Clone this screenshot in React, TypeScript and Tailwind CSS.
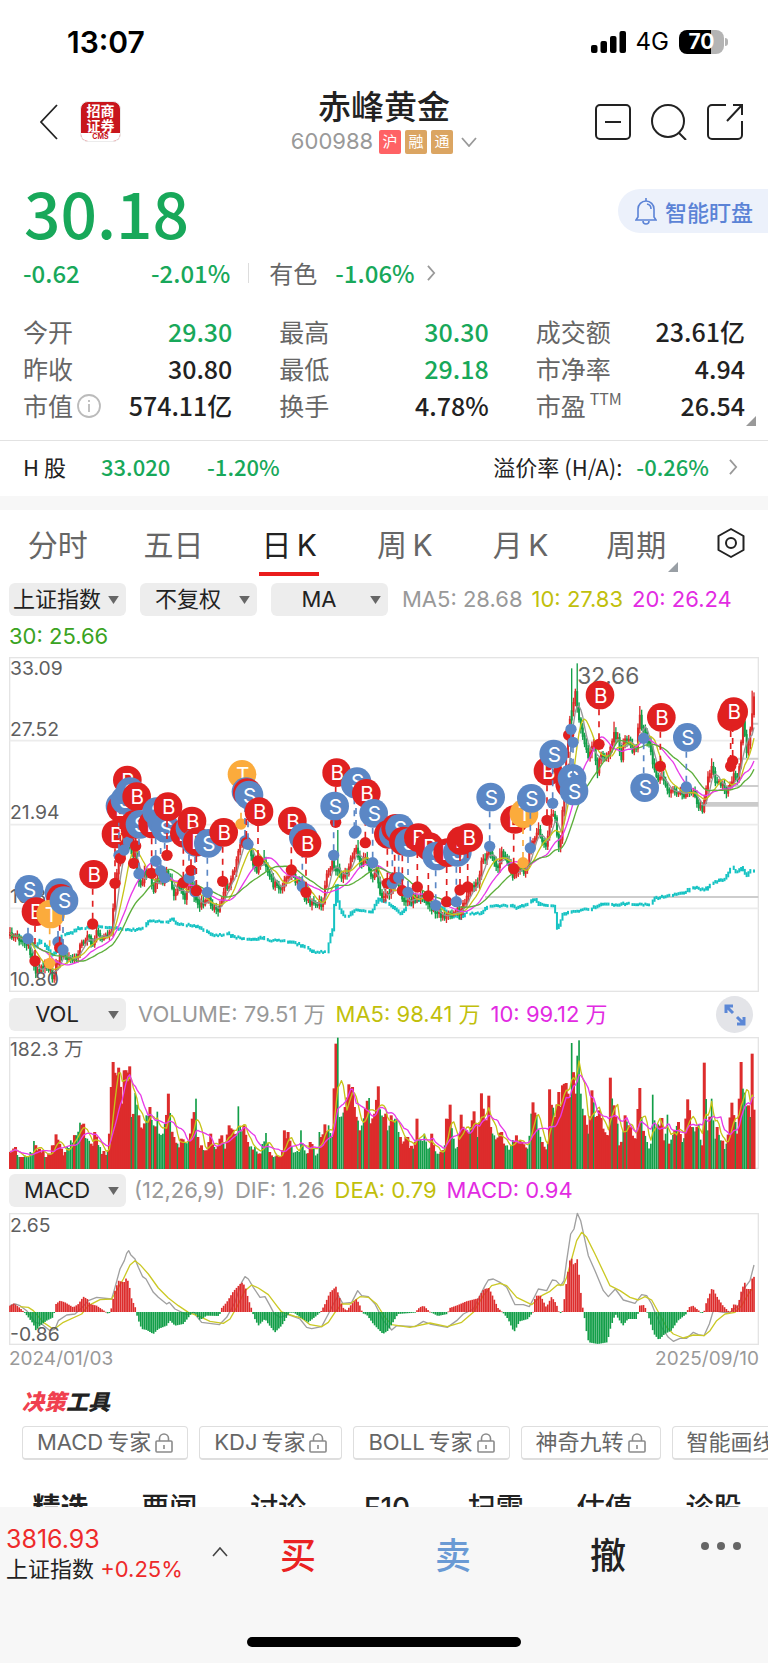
import React from "react";

const CJK = "font-['Noto_Sans_CJK_SC','Noto_Sans_CJK_TC',sans-serif]";

type Point = [number, number];
type Mark = ["B" | "S" | "T", number, number, number];

const RED = "#dd2c2c";
const GREEN = "#129e48";
const COLORS = { B: "#e02020", S: "#5b87c5", T: "#fbab3c" };

const START = 30;
const END = 2262;
const COUNT = 405;
const STEP = (END - START) / (COUNT - 1);

const parse = (s: string): Point[] =>
  s
    .trim()
    .split(/\s+/)
    .map((p) => p.split(",").map(Number) as Point);

const at = (points: Point[], x: number) => {
  if (x <= points[0][0]) return points[0][1];
  for (let i = 1; i < points.length; i++) {
    const [x1, y1] = points[i];
    if (x <= x1) {
      const [x0, y0] = points[i - 1];
      return y0 + ((y1 - y0) * (x - x0)) / (x1 - x0 || 1);
    }
  }
  return points[points.length - 1][1];
};

// stable pseudo random value in -1..1
const noise = (i: number, seed: number) => {
  const v = Math.sin(i * 12.9898 + seed * 78.233) * 43758.5453;
  return (v - Math.floor(v)) * 2 - 1;
};

const xs = Array.from({ length: COUNT }, (_, i) => START + i * STEP);

const average = (values: number[], n: number) =>
  values
    .map((_, i) => {
      const part = values.slice(Math.max(0, i - n + 1), i + 1);
      const mean = part.reduce((a, b) => a + b, 0) / part.length;
      return `${xs[i].toFixed(1)},${mean.toFixed(1)}`;
    })
    .join(" ");

const pricePoints = parse(`
30,855 60,865 85,890 105,960 120,965 135,930 150,960 158,985 170,940 185,910 200,925 225,930 240,890 262,855 275,885 290,850 310,860
332,855 338,800 345,700 355,640 365,620 375,570 385,555 395,620 405,600 412,680 425,710 435,665 450,680 460,715 475,690 490,695
500,660 512,700 525,745 535,700 555,740 570,690 590,765 605,760 620,745 635,765 655,780 670,720 690,700 705,650 715,600 728,560
745,590 770,670 790,625 810,690 830,710 845,720 865,670 880,680 900,700 915,750 935,760 950,755 968,760 980,680 995,640 1015,660
1025,690 1040,670 1055,620 1070,590 1080,650 1095,610 1115,680 1130,660 1140,730 1160,740 1175,710 1190,690 1205,750 1225,755
1245,740 1265,730 1290,770 1310,790 1340,800 1360,780 1380,785 1400,745 1420,710 1435,700 1445,640 1460,610 1475,610 1490,660
1505,610 1520,630 1540,690 1554,650 1574,670 1589,600 1604,560 1614,530 1624,575 1639,580 1654,500 1664,490 1674,590 1684,570
1689,440 1702,260 1714,180 1727,130 1734,180 1749,270 1764,320 1779,270 1792,360 1804,310 1814,330 1829,310 1841,240 1854,270
1864,330 1874,260 1884,270 1899,310 1909,290 1917,190 1929,240 1944,270 1959,340 1974,390 1984,370 2004,430 2024,420 2044,435
2064,420 2079,420 2094,460 2109,480 2116,420 2129,370 2136,350 2146,390 2164,400 2179,430 2194,400 2204,360 2214,400 2221,300
2229,210 2242,320 2250,240 2256,200 2262,150`);

const closes = xs.map((x, i) => at(pricePoints, x) + noise(i, 1) * 10);

// single bars whose shadow goes far above the body
const longShadows = parse("790,600 1012,540 1072,570 1500,595 1613,517 1716,55 1733,40 1842,215 1917,168 2136,325 2257,122");

const candles = closes.map((close, i) => {
  const open = i ? closes[i - 1] : close + 6;
  const tall = longShadows.find(([x]) => Math.abs(x - xs[i]) <= STEP / 2);
  const up = i > COUNT - 5 || close < open;
  const spike = tall && (tall[0] === 1012 || tall[0] === 1716 || tall[0] === 1733);
  return {
    x: xs[i],
    up: spike ? false : up,
    top: Math.min(open, close) - 2,
    bottom: Math.max(open, close) + 3,
    high: tall ? tall[1] : Math.min(open, close) - 6 - Math.abs(noise(i, 2)) * 12,
    low: Math.max(open, close) + 6 + Math.abs(noise(i, 3)) * 12,
  };
});

const indexPoints = parse(`
30,855 70,862 95,880 105,895 118,870 135,885 155,915 170,900 185,855 215,848 235,835 300,828 340,835 395,840 430,835 445,815
500,815 515,808 530,820 590,830 640,855 670,855 680,850 700,862 740,865 770,870 785,860 800,872 850,872 900,885 940,905 980,905
990,860 1000,830 1002,770 1007,700 1015,770 1030,795 1045,800 1060,780 1115,785 1135,745 1175,770 1200,790 1225,765 1265,745
1290,765 1325,775 1350,795 1380,805 1395,790 1440,790 1460,772 1530,765 1544,773 1584,760 1602,745 1619,765 1664,770 1669,835
1679,820 1686,795 1714,783 1769,778 1804,760 1854,768 1874,760 1949,765 1964,745 2014,735 2059,725 2074,710 2114,720 2134,700
2174,685 2194,652 2209,665 2224,652 2239,678 2249,662 2262,665`);

const marks: Mark[] = [
  ["S", 87, 718, 866], ["B", 108, 785, 933], ["S", 177, 728, 876], ["B", 182, 745, 893], ["T", 152, 792, 940],
  ["S", 192, 752, 900], ["B", 281, 673, 822], ["B", 348, 552, 700], ["S", 360, 468, 616], ["B", 364, 476, 625],
  ["B", 382, 390, 540], ["S", 375, 450, 600], ["S", 390, 425, 575], ["B", 410, 440, 588], ["B", 404, 523, 640],
  ["S", 420, 523, 671], ["B", 458, 522, 670], ["S", 470, 485, 633], ["S", 485, 515, 662], ["S", 497, 535, 683],
  ["B", 504, 470, 616], ["B", 553, 550, 698], ["S", 570, 535, 684], ["B", 576, 513, 661], ["S", 588, 577, 725],
  ["B", 592, 575, 722], ["S", 625, 580, 727], ["B", 671, 547, 694], ["T", 726, 373, 522], ["S", 738, 425, 573],
  ["B", 742, 428, 578], ["S", 747, 435, 583], ["B", 777, 485, 633], ["B", 877, 513, 660], ["S", 910, 562, 710],
  ["B", 921, 580, 727], ["B", 1010, 368, 517], ["S", 1004, 468, 616], ["S", 1066, 402, 549], ["S", 1071, 395, 543],
  ["B", 1099, 430, 578], ["S", 1121, 490, 638], ["B", 1165, 553, 700], ["S", 1180, 552, 700], ["B", 1187, 535, 684],
  ["S", 1199, 535, 683], ["B", 1210, 573, 722], ["S", 1227, 578, 727], ["B", 1255, 563, 711], ["B", 1288, 590, 738],
  ["S", 1310, 618, 766], ["B", 1343, 608, 755], ["S", 1372, 607, 755], ["B", 1383, 572, 720], ["B", 1406, 563, 711],
  ["S", 1472, 441, 589], ["B", 1544, 508, 656], ["T", 1572, 491, 638], ["S", 1594, 445, 594], ["B", 1644, 363, 511],
  ["S", 1661, 312, 460], ["B", 1709, 402, 255], ["S", 1716, 385, 238], ["S", 1722, 423, 277], ["B", 1800, 135, 283],
  ["B", 1984, 202, 349], ["S", 1934, 413, 265], ["S", 2062, 262, 411], ["B", 2195, 200, 349], ["B", 2201, 185, 333],
];

const volumePoints = parse(`
30,485 45,470 55,500 75,495 90,485 102,452 120,475 145,490 155,465 170,432 185,475 200,470 215,450 238,397 250,400 262,445
275,460 285,425 300,470 322,480 329,430 335,290 342,215 348,255 358,232 365,340 375,240 388,228 395,380 407,308 418,375 428,415
440,375 452,350 462,405 472,364 480,430 490,430 505,310 512,368 520,440 535,460 545,445 565,450 577,385 587,325 593,440 605,465
620,480 632,430 645,470 665,435 675,475 685,405 697,418 707,430 713,348 719,410 730,405 745,455 765,470 775,490 798,428 810,485
830,495 850,480 855,420 865,425 875,470 895,485 905,420 915,480 920,490 932,455 950,490 958,425 963,440 972,402 985,405 998,440
1006,160 1013,142 1020,380 1035,350 1045,282 1058,290 1065,350 1080,420 1095,355 1105,323 1110,390 1125,370 1133,288 1140,357
1155,370 1165,420 1174,375 1189,385 1204,440 1224,440 1239,475 1253,385 1259,445 1274,430 1286,475 1297,430 1314,490 1334,465
1341,385 1351,343 1359,445 1374,470 1384,373 1399,420 1414,390 1424,363 1436,440 1444,309 1452,355 1459,390 1466,316 1474,410
1484,435 1504,425 1524,465 1547,435 1564,455 1584,475 1591,370 1601,336 1609,375 1624,455 1642,460 1650,297 1659,352 1665,380
1674,305 1682,350 1687,285 1696,278 1705,310 1712,320 1717,158 1724,310 1733,196 1738,150 1744,310 1754,375 1764,430 1776,300
1789,380 1799,360 1809,415 1824,435 1831,262 1842,345 1852,400 1859,465 1875,375 1889,405 1906,445 1918,293 1926,380 1939,455
1950,460 1956,313 1962,390 1970,410 1984,383 1994,450 2000,373 2007,460 2024,420 2037,395 2049,455 2065,327 2074,410 2094,402
2107,465 2115,217 2122,420 2137,325 2146,445 2154,410 2164,450 2179,460 2196,337 2204,395 2210,430 2217,325 2224,215 2231,295
2244,345 2251,380 2257,190 2264,358`);

const greenRanges = parse(`
48,62 74,106 130,140 185,190 200,222 228,245 256,270 292,306 318,324 392,398 404,412 434,448 455,463 470,495 508,515 528,538
550,570 584,590 606,614 640,645 670,676 706,730 748,756 762,775 785,805 815,828 872,925 940,962 985,1000 1010,1030 1072,1076
1084,1092 1102,1110 1137,1150 1160,1172 1182,1200 1235,1242 1254,1290 1303,1320 1330,1338 1355,1374 1410,1412 1432,1438
1474,1486 1515,1542 1580,1595 1606,1624 1640,1645 1655,1665 1714,1720 1730,1752 1762,1770 1780,1786 1804,1808 1836,1842
1850,1856 1866,1870 1880,1884 1920,1928 1936,1978 1996,2003 2012,2020 2028,2034 2046,2056 2078,2090 2096,2106 2118,2124
2132,2146 2156,2166 2172,2184 2206,2212 2226,2240 2248,2252`);

const volumes = xs.map((x, i) => {
  const key = volumePoints.find(([kx]) => Math.abs(kx - x) <= STEP / 2);
  return key ? key[1] : Math.min(500, at(volumePoints, x) + 10 + noise(i, 5) * 12);
});

const macdPoints = parse(`
30,405 42,398 60,412 72,424 85,440 100,460 108,480 120,465 140,450 160,440 168,400 180,390 195,395 220,410 235,400 250,378
262,385 270,400 290,405 318,424 325,430 332,424 337,395 345,360 355,330 372,335 380,320 387,340 395,385 408,415 412,440 425,475
440,478 460,490 475,475 500,465 510,450 525,465 550,460 575,428 585,428 600,448 620,435 658,436 665,412 680,395 700,362 725,335
735,345 745,385 755,415 762,440 775,465 795,445 805,460 825,485 845,465 868,426 880,424 895,436 925,455 950,435 962,424 975,400
990,365 1008,348 1015,370 1028,410 1040,420 1055,400 1070,385 1080,405 1088,428 1100,432 1120,460 1149,490 1164,480 1179,455
1194,430 1244,426 1259,410 1271,405 1289,423 1314,436 1342,430 1349,412 1374,403 1399,392 1434,383 1452,355 1467,352 1479,378
1494,412 1509,426 1524,445 1542,485 1559,452 1584,445 1599,424 1606,375 1622,375 1639,410 1655,378 1669,400 1679,430 1689,420
1697,350 1706,290 1712,255 1722,285 1732,265 1738,320 1746,400 1752,430 1759,480 1766,515 1794,520 1822,515 1832,470 1846,430
1869,465 1884,445 1912,445 1917,405 1932,403 1942,425 1952,460 1962,490 1977,508 1994,490 2014,480 2034,450 2059,430 2066,410
2079,405 2104,426 2111,428 2119,395 2137,350 2149,375 2169,405 2189,425 2202,400 2214,405 2224,360 2234,335 2240,355 2252,355
2257,320 2264,318`);

const dif =
  "30,405 45,400 60,405 80,420 95,440 105,455 125,460 150,480 165,475 175,450 200,433 225,430 245,412 265,390 290,380 335,385 345,350 360,295 373,270 380,248 386,240 392,252 405,265 415,290 428,318 438,325 460,365 475,380 500,400 508,395 525,415 560,432 580,425 605,455 658,462 680,440 705,395 725,335 735,318 745,325 760,350 780,380 795,378 810,405 822,428 840,440 865,432 900,445 920,470 935,474 965,468 985,430 1000,400 1015,375 1028,398 1055,395 1073,360 1085,375 1105,378 1125,400 1150,450 1175,478 1190,465 1245,468 1270,452 1290,460 1342,470 1370,450 1390,430 1420,415 1440,375 1455,345 1465,328 1480,325 1500,335 1520,350 1545,402 1570,402 1588,408 1600,385 1615,355 1640,360 1657,328 1668,330 1682,345 1692,330 1700,270 1712,190 1722,175 1732,128 1742,150 1765,255 1785,300 1810,360 1825,378 1846,355 1870,388 1905,398 1925,372 1940,375 1955,400 1965,425 1985,470 2005,500 2020,512 2040,503 2060,503 2080,485 2095,492 2112,495 2128,460 2140,420 2170,425 2190,425 2215,405 2235,350 2250,330 2262,283";
const dea =
  "60,408 85,410 100,420 130,455 155,472 170,470 190,455 245,430 265,405 300,387 335,385 350,360 370,325 390,283 405,270 420,282 445,310 475,352 505,382 535,405 565,425 600,438 630,452 670,458 690,445 710,410 735,360 755,343 775,352 805,372 830,405 845,424 885,437 905,442 930,462 965,468 985,455 1005,425 1025,400 1050,400 1080,378 1105,380 1130,400 1155,440 1175,462 1230,470 1290,457 1342,468 1385,455 1420,425 1450,375 1475,345 1500,338 1520,345 1550,380 1595,402 1625,375 1650,362 1672,343 1690,343 1700,320 1715,265 1730,210 1745,185 1760,200 1785,250 1830,345 1860,360 1890,380 1915,388 1935,378 1955,388 1975,424 2000,470 2020,490 2050,502 2080,493 2112,495 2130,480 2150,450 2175,430 2205,425 2225,405 2245,370 2256,355";

const quotes = [
  { label: "今开", value: "29.30", down: true },
  { label: "最高", value: "30.30", down: true },
  { label: "成交额", value: "23.61亿" },
  { label: "昨收", value: "30.80" },
  { label: "最低", value: "29.18", down: true },
  { label: "市净率", value: "4.94" },
  { label: "市值", value: "574.11亿", info: true },
  { label: "换手", value: "4.78%" },
  { label: "市盈", value: "26.54", sup: "TTM" },
];

const Chevron = ({ className }: { className: string }) => (
  <svg viewBox="0 0 10 18" className={className} fill="none" stroke="currentColor" strokeWidth="2">
    <path d="M1 1l7 8-7 8" />
  </svg>
);

const Picker = ({ label, options }: { label: string; options: string[] }) => (
  <div className="flex h-[33px] w-[117px] shrink-0 items-center justify-between rounded-md bg-[#ededed] pr-[7px] text-[#222]">
    <select aria-label={label} className="h-full w-24 appearance-none bg-transparent text-center text-[22px] outline-none">
      {options.map((o) => (
        <option key={o}>{o}</option>
      ))}
    </select>
    <svg viewBox="0 0 12 9" className="h-2 w-[11px] shrink-0" fill="#666">
      <path d="M0 0h12L6 9z" />
    </svg>
  </div>
);

const AxisText = ({ x, y, children }: { x: number; y: number; children: React.ReactNode }) => (
  <text x={x} y={y} fontSize="58" fill="#5f5f5f">
    {children}
  </text>
);

const Frame = ({ y, height }: { y: number; height: number }) => (
  <rect x="29" y={y + 2} width="2246" height={height - 4} fill="none" stroke="#e4e4e4" strokeWidth="4" />
);

const PriceChart = () => (
  <svg viewBox="27 21 2250 1005" className="block h-auto w-full overflow-visible" role="img" aria-label="日K">
    <Frame y={21} height={1005} />
    <path d="M29 272H2275M29 524H2275M29 775H2275" stroke="#ececec" strokeWidth="5" />
    <path d="M1455 741H2275M2254 221H2275M2214 326H2275M2204 408H2275" stroke="#cdcdcd" strokeWidth="6" />
    <path d="M2116 463H2275" stroke="#cbcbcb" strokeWidth="14" />
    {xs.map((x, i) => {
      if (i % 11 === 7) return null;
      const y = at(indexPoints, x);
      const last = at(indexPoints, x - STEP);
      return <rect key={i} x={x - 3} y={Math.min(y, last) - 4 + noise(i, 8) * 3} width="6" height={Math.abs(y - last) + 8} fill="#16c3c3" />;
    })}
    {candles.map((c, i) => (
      <g key={i} fill={c.up ? RED : GREEN}>
        <rect x={c.x - 2} y={c.high} width="4" height={c.low - c.high} />
        <rect x={c.x - 3} y={c.top} width="6" height={c.bottom - c.top} />
      </g>
    ))}
    <g fill="none" strokeWidth="4" strokeLinejoin="round">
      <polyline points={average(closes, 5)} stroke="#969696" />
      <polyline points={average(closes, 10)} stroke="#c6c419" />
      <polyline points={average(closes, 20)} stroke="#e83be8" />
      <polyline points={average(closes, 30)} stroke="#5cae3a" />
    </g>
    <AxisText x={30} y={76}>33.09</AxisText>
    <AxisText x={30} y={258}>27.52</AxisText>
    <AxisText x={30} y={508}>21.94</AxisText>
    <AxisText x={30} y={758}>16.37</AxisText>
    <AxisText x={30} y={1008}>10.80</AxisText>
    <text x="1732" y="101" fontSize="68" fill="#666">
      32.66
    </text>
    {marks.map(([kind, x, y, dot], i) => (
      <g key={i} stroke={COLORS[kind]} fill={COLORS[kind]}>
        <circle cx={x} cy={y} r="43" stroke="none" />
        <text x={x + 2} y={y + 23} fontSize="62" textAnchor="middle" fill="#fff" stroke="none">
          {kind}
        </text>
        <path d={`M${x - 3} ${y + (dot > y ? 43 : -43)}V${dot}`} strokeWidth="5" strokeDasharray="18 18" />
        <circle cx={x - 3} cy={dot} r="17" stroke="none" />
      </g>
    ))}
  </svg>
);

const VolumeChart = () => (
  <svg viewBox="27 140 2250 396" className="block h-auto w-full" role="img" aria-label="成交量">
    <Frame y={140} height={396} />
    {volumes.map((y, i) => {
      const green = greenRanges.some(([a, b]) => xs[i] >= a && xs[i] <= b);
      const w = green ? 5 : 9;
      return <rect key={i} x={xs[i] - w / 2} y={y} width={w} height={536 - y} fill={green ? GREEN : RED} />;
    })}
    <g fill="none" strokeWidth="4" strokeLinejoin="round">
      <polyline points={average(volumes, 5)} stroke="#c6c419" />
      <polyline points={average(volumes, 10)} stroke="#e83be8" />
    </g>
    <AxisText x={30} y={196}>182.3 万</AxisText>
  </svg>
);

const MacdChart = () => (
  <svg viewBox="27 127 2250 396" className="block h-auto w-full overflow-visible" role="img" aria-label="MACD">
    <Frame y={127} height={396} />
    <g fill="none" strokeWidth="4" strokeLinejoin="round">
      <polyline points={dif} stroke="#a0a0a0" />
      <polyline points={dea} stroke="#cbc926" />
    </g>
    {xs.map((x, i) => {
      const y = at(macdPoints, x);
      return (
        <rect key={i} x={x - 2.5} y={Math.min(y, 424)} width="5" height={Math.max(2, Math.abs(y - 424))} fill={y < 424 ? RED : GREEN} />
      );
    })}
    <AxisText x={30} y={184}>2.65</AxisText>
    <AxisText x={30} y={511}>-0.86</AxisText>
  </svg>
);

const StatusBar = () => (
  <div className="flex h-[84px] items-center justify-between pr-10 pl-[67px] text-black">
    <span className="text-[30px] font-semibold">13:07</span>
    <div className="flex items-center gap-[10px]">
      <svg viewBox="0 0 35 22" className="h-[22px] w-[35px]">
        <rect x="0" y="14" width="6.5" height="8" rx="2" />
        <rect x="9.5" y="10" width="6.5" height="12" rx="2" />
        <rect x="19" y="5" width="6.5" height="17" rx="2" />
        <rect x="28.5" y="0" width="6.5" height="22" rx="2" />
      </svg>
      <span className="text-2xl">4G</span>
      <div className="flex items-center gap-px">
        <div className="flex h-6 w-[45px] items-center justify-center rounded-lg bg-[linear-gradient(90deg,#000_70%,#b4b4b4_70%)] text-[21px] font-bold text-white">
          70
        </div>
        <span className="h-2 w-[3px] rounded-r bg-[#b4b4b4]" />
      </div>
    </div>
  </div>
);

const Header = () => (
  <header className="grid h-[75px] grid-cols-[1fr_auto_1fr] items-center px-[25px] text-[#222]">
    <div className="flex items-center gap-[22px] pl-[15px]">
      <button aria-label="返回">
        <svg viewBox="0 0 18 36" className="h-9 w-[18px]" fill="none" stroke="currentColor" strokeWidth="1.8">
          <path d="M17 1L1 18l16 17" />
        </svg>
      </button>
      <div className="flex h-[41px] w-[41px] flex-col overflow-hidden rounded-lg border border-[#ececec] bg-[#c8161c] text-center">
        <span className={`${CJK} h-[31px] pt-px text-sm leading-[15px] font-bold text-white`}>
          招商
          <br />
          证券
        </span>
        <span className="bg-white text-[7px] leading-[8px] font-bold text-[#c8161c]">CMS</span>
      </div>
    </div>
    <div className="flex flex-col items-center">
      <h1 className="text-[33px] leading-[42px] font-medium">赤峰黄金</h1>
      <button className="flex h-[30px] items-center gap-1 pb-0.5 text-[22px] text-[#999]">
        600988
        <span className="ml-0.5 h-6 w-[22px] rounded-xs bg-[#ff6265] text-[15px] leading-6 text-white">沪</span>
        <span className="h-6 w-[22px] rounded-xs bg-[#dba562] text-[15px] leading-6 text-white">融</span>
        <span className="h-6 w-[22px] rounded-xs bg-[#dba562] text-[15px] leading-6 text-white">通</span>
        <svg viewBox="0 0 16 10" className="ml-1 h-[10px] w-4" fill="none" stroke="currentColor" strokeWidth="1.8">
          <path d="M1 1l7 8 7-8" />
        </svg>
      </button>
    </div>
    <div className="flex items-center justify-end gap-5">
      <button aria-label="移除自选">
        <svg viewBox="0 0 36 36" className="h-9 w-9" fill="none" stroke="currentColor" strokeWidth="2">
          <rect x="1" y="1" width="34" height="34" rx="4" />
          <path d="M10 18h16" />
        </svg>
      </button>
      <button aria-label="搜索">
        <svg viewBox="0 0 36 36" className="h-9 w-9" fill="none" stroke="currentColor" strokeWidth="2">
          <circle cx="17" cy="17" r="16" />
          <path d="M28 29l7 7" />
        </svg>
      </button>
      <button aria-label="分享">
        <svg viewBox="0 0 36 36" className="h-9 w-9" fill="none" stroke="currentColor" strokeWidth="2">
          <path d="M19 1H5a4 4 0 0 0-4 4v26a4 4 0 0 0 4 4h26a4 4 0 0 0 4-4V17M26 1h9v10M35 1L20 17" />
        </svg>
      </button>
    </div>
  </header>
);

const LockIcon = () => (
  <svg viewBox="0 0 18 20" className="h-5 w-[18px]" fill="none" stroke="#8a8a8a" strokeWidth="1.6">
    <rect x="1" y="8" width="16" height="11" rx="1" />
    <path d="M4.500 8V5.500a4.500 4.500 0 0 1 9 0V8M9 12v4" />
  </svg>
);

const App = () => {
  return (
    <div className="flex h-screen flex-col overflow-hidden bg-white font-['Inter','Noto_Sans_CJK_SC',sans-serif] text-[#222]">
      <main className="min-h-0 flex-1 overflow-hidden">
        <StatusBar />
        <Header />

        {/* price */}
        <section className={CJK}>
          <div className="mt-5 flex h-16 items-center justify-between pl-6">
            <span className="text-[64px] leading-[60px] font-medium text-[#18a85a]">30.18</span>
            <button className="flex h-11 items-center gap-2 rounded-l-full bg-[#ecf1fb] pr-[15px] pl-[17px] text-[22px] font-medium text-[#5b83d6]">
              <svg viewBox="0 0 22 27" className="h-[27px] w-[22px]" fill="none" stroke="currentColor" strokeWidth="1.6">
                <path d="M1 22h20l-2-3v-8a8 8 0 0 0-16 0v8zM8 23a3 3 0 0 0 6 0M11 3V0M12 6a5 5 0 0 1 4 5" />
              </svg>
              智能盯盘
            </button>
          </div>
          <div className="mt-[14px] flex h-8 items-center pl-[23px] text-2xl font-medium text-[#18a85a]">
            <span className="w-32">-0.62</span>
            <span>-2.01%</span>
            <span className="mr-5 ml-[18px] h-5 w-px bg-[#ddd]" />
            <button className="flex items-center">
              <span className="mr-[18px] font-normal text-[#666]">有色</span>
              -1.06%
              <Chevron className="ml-3 h-4 w-[9px] text-[#999]" />
            </button>
          </div>
          <dl className="mt-6 grid grid-cols-3 gap-x-[47px] px-[23px] text-[25px] leading-[37px]">
            {quotes.map((q) => (
              <div key={q.label} className="flex h-[37px] items-center justify-between">
                <dt className="flex items-center text-[25px] text-[#666]">
                  {q.label}
                  {q.info && (
                    <svg viewBox="0 0 24 24" className="ml-1 h-6 w-6" fill="none" stroke="#bbb" strokeWidth="1.8">
                      <circle cx="12" cy="12" r="11" />
                      <path d="M12 10v8M12 6v2" />
                    </svg>
                  )}
                  {q.sup && <span className="mb-4 ml-1 text-base leading-5">{q.sup}</span>}
                </dt>
                <dd className={q.down ? "font-medium text-[#18a85a]" : "font-medium"}>{q.value}</dd>
              </div>
            ))}
          </dl>
          <div className="flex h-4 justify-end pr-3">
            <svg viewBox="0 0 10 10" className="-mt-2 h-[10px] w-[10px]" fill="#999">
              <path d="M10 0v10H0z" />
            </svg>
          </div>
          <a href="#h" className="flex h-[56px] items-center border-t border-[#e2e2e2] pr-[30px] pb-1 pl-[23px] text-[22px]">
            <span className="w-[78px]">H 股</span>
            <span className="w-[106px] font-medium text-[#18a85a]">33.020</span>
            <span className="font-medium text-[#18a85a]">-1.20%</span>
            <span className="mr-[14px] ml-auto">溢价率 (H/A):</span>
            <span className="font-medium text-[#18a85a]">-0.26%</span>
            <Chevron className="ml-5 h-4 w-[9px] text-[#999]" />
          </a>
        </section>
        <div className="h-[14px] bg-[#f7f7f7]" />

        {/* period tabs */}
        <nav className="flex h-[66px] text-[30px] text-[#666]">
          {["分时", "五日", "日\u2009K", "周\u2009K", "月\u2009K", "周期"].map((t, i) => (
            <button key={t} className="flex flex-1 flex-col items-center">
              {i === 2 ? (
                <span className="h-[66px] border-b-4 border-[#ea1c1c] px-0.5 leading-[70px] text-[#222]">{t}</span>
              ) : (
                <span className="relative leading-[70px]">
                  {t}
                  {t === "周期" && (
                    <svg viewBox="0 0 10 10" className="absolute -right-3 bottom-2 h-[10px] w-[10px]" fill="#999fa5">
                      <path d="M10 0v10H0z" />
                    </svg>
                  )}
                </span>
              )}
            </button>
          ))}
          <button aria-label="设置" className="flex w-[74px] items-center justify-center text-[#222]">
            <svg viewBox="0 0 28 30" className="h-[30px] w-7" fill="none" stroke="currentColor" strokeWidth="2">
              <path d="M14 1l12.500 7v14L14 29 1.500 22V8z" strokeLinejoin="round" />
              <circle cx="14" cy="15" r="5" />
            </svg>
          </button>
        </nav>

        {/* charts */}
        <section className="px-[9px] text-[22px]">
          <div className="mt-[7px] flex items-center gap-[14px]">
            <Picker label="叠加指数" options={["上证指数", "深证成指"]} />
            <Picker label="复权方式" options={["不复权", "前复权", "后复权"]} />
            <Picker label="主图指标" options={["MA", "BOLL"]} />
            <div className="flex gap-[9px] whitespace-nowrap">
              <span className="text-[#999]">MA5: 28.68</span>
              <span className="text-[#c1bf0c]">10: 27.83</span>
              <span className="text-[#e22be2]">20: 26.24</span>
            </div>
          </div>
          <div className="h-[41px] leading-10 text-[#3aa322]">30: 25.66</div>
          <PriceChart />
          <div className="my-1.5 flex h-[33px] items-center gap-3">
            <Picker label="副图指标一" options={["VOL", "KDJ"]} />
            <div className="flex gap-[10px] whitespace-nowrap">
              <span className="text-[#999]">VOLUME: 79.51 万</span>
              <span className="text-[#c1bf0c]">MA5: 98.41 万</span>
              <span className="text-[#e22be2]">10: 99.12 万</span>
            </div>
            <button aria-label="全屏" className="mr-1.5 ml-auto flex h-[37px] w-[37px] items-center justify-center rounded-full bg-[#e3e4e8]">
              <svg viewBox="0 0 22 22" className="h-[22px] w-[22px]" fill="none" stroke="#5b87d6" strokeWidth="3">
                <path d="M2 2l7 7M2 9V2h7M13 13l7 7M20 13v7h-7" />
              </svg>
            </button>
          </div>
          <VolumeChart />
          <div className="mt-[5px] mb-1.5 flex h-[33px] items-center gap-2">
            <Picker label="副图指标二" options={["MACD", "RSI"]} />
            <div className="flex gap-[10px] whitespace-nowrap">
              <span className="text-[#999]">(12,26,9)</span>
              <span className="text-[#999]">DIF: 1.26</span>
              <span className="text-[#c1bf0c]">DEA: 0.79</span>
              <span className="text-[#e22be2]">MACD: 0.94</span>
            </div>
          </div>
          <MacdChart />
          <div className="flex justify-between text-[19px] leading-7 text-[#999]">
            <span>2024/01/03</span>
            <span>2025/09/10</span>
          </div>
        </section>

        {/* tools */}
        <section className="pl-[22px]">
          <h2 className="mt-[15px] text-[22px] leading-7 font-black italic">
            <span className="text-[#f0404f]">决策</span>工具
          </h2>
          <div className="mt-[10px] flex gap-[11px] overflow-hidden text-[22px] whitespace-nowrap text-[#666]">
            {["MACD\u2009专家", "KDJ\u2009专家", "BOLL\u2009专家", "神奇九转", "智能画线"].map((t) => (
              <button key={t} className="flex h-[34px] shrink-0 items-center gap-1 rounded border border-b-2 border-[#dedede] px-[14px]">
                {t}
                <LockIcon />
              </button>
            ))}
          </div>
        </section>
        <nav className="mt-7 flex pl-1.5 text-[28px] leading-10 font-medium">
          {["精选", "要闻", "讨论", "F10", "扫雷", "估值", "诊股"].map((t, i) => (
            <button key={t} className={i === 0 ? "flex-1 font-bold" : "flex-1"}>
              {t}
            </button>
          ))}
        </nav>
      </main>

      <footer className="flex h-[156px] shrink-0 flex-col items-center bg-[#f7f7f7] pt-4 pb-4">
        <div className="grid h-[62px] w-full grid-cols-[228px_14fr_17fr_14fr_90px] items-center text-[36px]">
          <button className="flex items-center justify-between pl-[6px] text-left">
            <span>
              <span className="block text-[25px] leading-[30px] text-[#ee2a2a]">3816.93</span>
              <span className="block text-[22px] leading-[30px]">
                上证指数 <span className="text-[#ee2a2a]">+0.25%</span>
              </span>
            </span>
            <svg viewBox="0 0 16 10" className="mb-1 h-[10px] w-4" fill="none" stroke="#444" strokeWidth="1.6">
              <path d="M1 9l7-8 7 8" />
            </svg>
          </button>
          <button className="pt-1 font-medium text-[#ea2222]">买</button>
          <button className="pt-1 font-medium text-[#6a9ad4]">卖</button>
          <button className="pt-1 font-medium">撤</button>
          <button aria-label="更多" className="mr-1 mb-4 flex justify-center gap-2">
            <span className="h-2 w-2 rounded-full bg-[#666]" />
            <span className="h-2 w-2 rounded-full bg-[#666]" />
            <span className="h-2 w-2 rounded-full bg-[#666]" />
          </button>
        </div>
        <div className="mt-auto h-[10px] w-[274px] rounded-full bg-black" />
      </footer>
    </div>
  );
};

export default App;
